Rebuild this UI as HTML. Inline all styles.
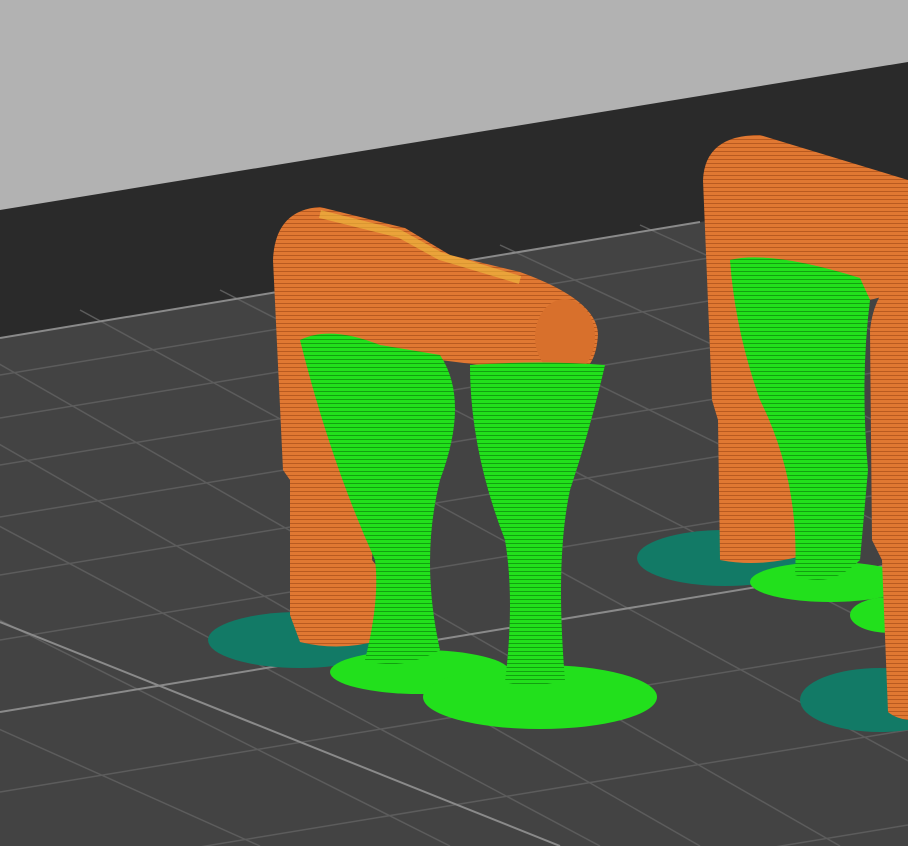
<!DOCTYPE html>
<html><head><style>html,body{margin:0;padding:0;background:#b2b2b2;overflow:hidden}svg{display:block}</style></head>
<body>
<svg width="908" height="846" viewBox="0 0 908 846" xmlns="http://www.w3.org/2000/svg">
<defs>
<pattern id="ho" width="6" height="4" patternUnits="userSpaceOnUse"><rect width="6" height="4" fill="#e07832"/><rect y="3" width="6" height="1" fill="#b85a20"/></pattern>
<pattern id="hg" width="6" height="4" patternUnits="userSpaceOnUse"><rect width="6" height="4" fill="#22e01c"/><rect y="3" width="6" height="1" fill="#12a010"/></pattern>
</defs>
<rect width="908" height="846" fill="#b2b2b2"/>
<polygon points="0,210 908,62 908,846 0,846" fill="#2a2a2a"/>
<polygon points="0,338 700,222 908,190 908,846 0,846" fill="#434343"/>
<g stroke="#5c5c5c" stroke-width="1.5">
<line x1="0" y1="375" x2="908" y2="225"/>
<line x1="0" y1="418" x2="908" y2="268"/>
<line x1="0" y1="465" x2="908" y2="315"/>
<line x1="0" y1="517" x2="908" y2="367"/>
<line x1="0" y1="575" x2="908" y2="425"/>
<line x1="0" y1="640" x2="908" y2="490"/>
<line x1="0" y1="792" x2="908" y2="642"/>
<line x1="0" y1="880" x2="908" y2="730"/>
<line x1="0" y1="975" x2="908" y2="825"/>
<line x1="-200" y1="330" x2="700" y2="846"/>
<line x1="-60" y1="330" x2="840" y2="846"/>
<line x1="80" y1="310" x2="980" y2="800"/>
<line x1="220" y1="290" x2="1100" y2="740"/>
<line x1="360" y1="268" x2="1200" y2="680"/>
<line x1="500" y1="245" x2="1300" y2="620"/>
<line x1="640" y1="225" x2="1400" y2="570"/>
<line x1="-200" y1="420" x2="600" y2="846"/>
<line x1="-200" y1="520" x2="450" y2="846"/>
<line x1="-200" y1="640" x2="260" y2="846"/>
</g>
<g stroke="#8a8a8a" stroke-width="2">
<line x1="0" y1="338" x2="700" y2="222"/>
<line x1="0" y1="622" x2="560" y2="846"/>
<line x1="0" y1="712" x2="908" y2="562"/>
</g>
<ellipse cx="300" cy="640" rx="92" ry="28" fill="#127a66"/>
<ellipse cx="725" cy="558" rx="88" ry="28" fill="#127a66"/>
<ellipse cx="880" cy="700" rx="80" ry="32" fill="#127a66"/>
<ellipse cx="420" cy="672" rx="90" ry="22" fill="#22e01c"/>
<ellipse cx="540" cy="697" rx="117" ry="32" fill="#22e01c"/>
<ellipse cx="830" cy="582" rx="80" ry="20" fill="#22e01c"/>
<ellipse cx="890" cy="615" rx="40" ry="18" fill="#22e01c"/>
<path d="M290,615 L290,480 L283,470 L273,260 Q275,210 320,207 L405,228 L450,255 L520,272 Q598,300 598,335 Q595,380 560,375 L440,360 L380,355 L372,560 L380,570 L380,640 Q340,652 300,642 Z" fill="url(#ho)"/>
<path d="M320,214 L400,234 L440,256 L520,280" stroke="#f0c040" stroke-width="8" fill="none" opacity=".6"/>
<ellipse cx="565" cy="337" rx="30" ry="38" fill="#d8702c"/>
<path d="M300,340 Q330,325 380,345 L440,355 Q470,400 440,480 Q420,560 440,650 Q400,672 365,660 Q380,600 375,560 Q330,460 300,340Z" fill="url(#hg)"/>
<path d="M470,365 Q540,360 605,365 Q590,430 570,490 Q555,560 565,680 Q530,690 505,682 Q515,600 505,540 Q470,450 470,365Z" fill="url(#hg)"/>
<path d="M720,560 L718,420 L712,400 L703,180 Q705,135 760,135 L908,180 L908,290 L870,300 L800,290 L805,555 Q760,568 720,560Z" fill="url(#ho)"/>
<path d="M730,260 Q770,250 860,278 L870,300 Q860,380 868,470 L860,560 Q830,590 795,575 Q800,480 760,400 Q735,330 730,260Z" fill="url(#hg)"/>
<path d="M870,330 Q875,285 908,270 L908,720 Q895,718 888,712 L882,560 L872,540 Z" fill="url(#ho)"/>
</svg>
</body></html>
